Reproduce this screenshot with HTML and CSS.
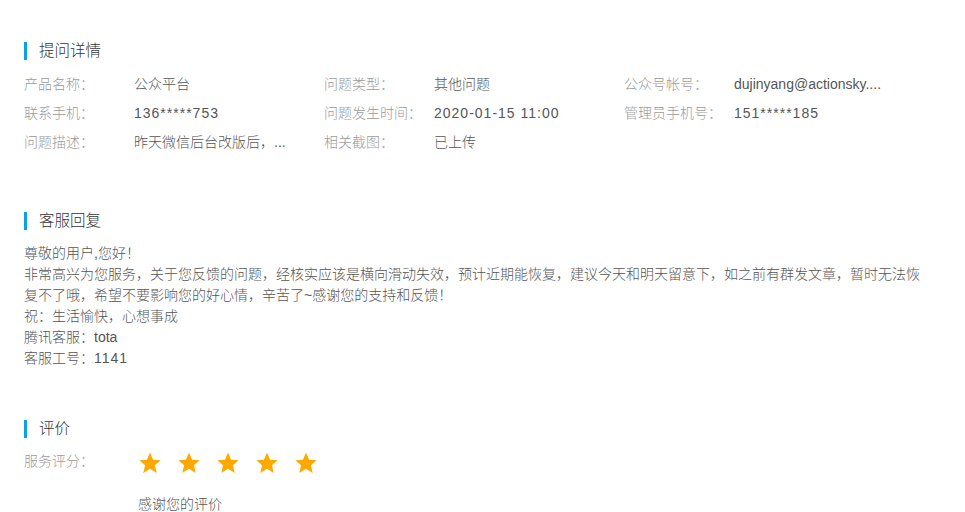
FILE: index.html
```html
<!DOCTYPE html>
<html lang="zh-CN">
<head>
<meta charset="utf-8">
<title>提问详情</title>
<link rel="stylesheet" href="styles.css">
</head>
<body>
<div class="page">
  <section class="sec sec-detail">
    <h2 class="title">提问详情</h2>
    <div class="grid">
      <div class="item"><span class="label">产品名称：</span><span class="value">公众平台</span></div>
      <div class="item"><span class="label">问题类型：</span><span class="value">其他问题</span></div>
      <div class="item"><span class="label">公众号帐号：</span><span class="value">dujinyang@actionsky....</span></div>
      <div class="item"><span class="label">联系手机：</span><span class="value num">136*****753</span></div>
      <div class="item"><span class="label">问题发生时间：</span><span class="value num">2020-01-15 11:00</span></div>
      <div class="item"><span class="label">管理员手机号：</span><span class="value num">151*****185</span></div>
      <div class="item"><span class="label">问题描述：</span><span class="value">昨天微信后台改版后，...</span></div>
      <div class="item"><span class="label">相关截图：</span><span class="value">已上传</span></div>
    </div>
  </section>

  <section class="sec sec-reply">
    <h2 class="title">客服回复</h2>
    <div class="reply">
      <p>尊敬的用户,您好！</p>
      <p>非常高兴为您服务，关于您反馈的问题，经核实应该是横向滑动失效，预计近期能恢复，建议今天和明天留意下，如之前有群发文章，暂时无法恢复不了哦，希望不要影响您的好心情，辛苦了~感谢您的支持和反馈！</p>
      <p>祝：生活愉快，心想事成</p>
      <p>腾讯客服：tota</p>
      <p>客服工号：<span class="num">1141</span></p>
    </div>
  </section>

  <section class="sec sec-rate">
    <h2 class="title">评价</h2>
    <div class="rate-row">
      <span class="label">服务评分：</span>
      <div class="stars">
        <svg class="star" viewBox="0 0 24 24"><path d="M12 1.5l3.1 7.2 7.6.6-5.8 5 1.8 7.6L12 17.8l-6.7 4.1 1.8-7.6-5.8-5 7.6-.6z"/></svg>
        <svg class="star" viewBox="0 0 24 24"><path d="M12 1.5l3.1 7.2 7.6.6-5.8 5 1.8 7.6L12 17.8l-6.7 4.1 1.8-7.6-5.8-5 7.6-.6z"/></svg>
        <svg class="star" viewBox="0 0 24 24"><path d="M12 1.5l3.1 7.2 7.6.6-5.8 5 1.8 7.6L12 17.8l-6.7 4.1 1.8-7.6-5.8-5 7.6-.6z"/></svg>
        <svg class="star" viewBox="0 0 24 24"><path d="M12 1.5l3.1 7.2 7.6.6-5.8 5 1.8 7.6L12 17.8l-6.7 4.1 1.8-7.6-5.8-5 7.6-.6z"/></svg>
        <svg class="star" viewBox="0 0 24 24"><path d="M12 1.5l3.1 7.2 7.6.6-5.8 5 1.8 7.6L12 17.8l-6.7 4.1 1.8-7.6-5.8-5 7.6-.6z"/></svg>
      </div>
    </div>
    <p class="thanks">感谢您的评价</p>
  </section>
</div>
</body>
</html>
```

FILE: styles.css
```css
* { box-sizing: border-box; }
html, body {
  margin: 0;
  padding: 0;
  background: #fff;
}
body {
  font-family: "Liberation Sans", "Noto Sans CJK SC", sans-serif;
  font-size: 14px;
  font-weight: 300;
  color: #555;
}
.page {
  padding: 42px 24px 0 24px;
}
.title {
  margin: 0;
  font-size: 15.5px;
  font-weight: 300;
  line-height: 18px;
  height: 18px;
  color: #333;
  border-left: 3px solid #0aa1e6;
  padding-left: 12px;
}
.grid {
  margin-top: 10px;
  display: grid;
  grid-template-columns: 300px 300px 300px;
}
.item {
  display: flex;
  line-height: 29px;
  height: 29px;
  white-space: nowrap;
}
.label {
  width: 110px;
  flex: none;
  color: #9a9a9a;
}
.value {
  color: #555;
}
.num {
  letter-spacing: 1px;
}
.sec-reply {
  margin-top: 55px;
}
.reply {
  margin-top: 13px;
  width: 902px;
  line-height: 21px;
  color: #555;
}
.reply p {
  margin: 0;
}
.sec-rate {
  margin-top: 51px;
}
.rate-row {
  display: flex;
  align-items: flex-start;
  margin-top: 12px;
  line-height: 22px;
}
.stars {
  display: flex;
  gap: 15px;
  padding-left: 4px;
  padding-top: 1px;
}
.star {
  width: 24px;
  height: 24px;
  fill: #ffa800;
}
.thanks {
  margin: 19px 0 0 114px;
  line-height: 20px;
  color: #555;
}
```
